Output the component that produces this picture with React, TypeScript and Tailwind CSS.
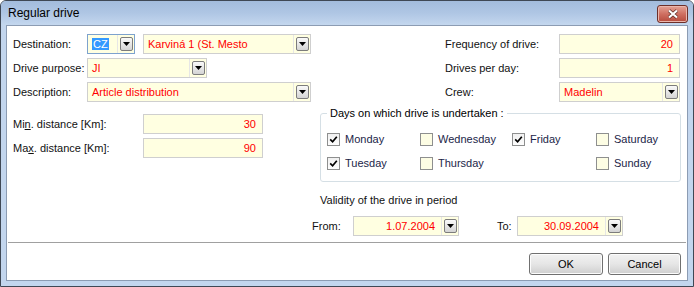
import React from "react";

type FieldProps = {
  className: string;
  value: string;
  right?: boolean;
  drop?: boolean;
  focus?: boolean;
};

function DropButton() {
  return (
    <div className="w-[17px] h-full flex items-center justify-center border-l border-[#e6e6e6] shrink-0">
      <div className="w-[13px] h-[14px] rounded-[2px] border border-[#7c7c7c] bg-linear-to-b from-[#fafafa] to-[#d4d4d4] flex items-center justify-center">
        <svg width="7" height="4" viewBox="0 0 7 4">
          <path d="M0 0h7L3.5 4z" fill="#000" />
        </svg>
      </div>
    </div>
  );
}

function Field({ className, value, right, drop, focus }: FieldProps) {
  return (
    <div
      className={`h-[20px] flex items-center bg-[#ffffe1] border ${focus ? "border-[#7da2ce]" : "border-[#cfcfcf]"} ${className}`}
    >
      {focus ? (
        <div className="flex-1 pl-[4px]">
          <span className="bg-[#3399ff] text-white px-[1px]">{value}</span>
        </div>
      ) : (
        <div className={`flex-1 text-[#ff0000] truncate ${right ? "text-right pr-[6px]" : "pl-[4px]"}`}>{value}</div>
      )}
      {drop && <DropButton />}
    </div>
  );
}

function Check({ label, checked }: { label: string; checked?: boolean }) {
  return (
    <div className="flex items-center h-[16px]">
      <div
        className={`w-[13px] h-[13px] border border-[#8e8f8f] flex items-center justify-center ${checked ? "bg-linear-to-b from-[#f0f0f0] to-[#fdfdfd]" : "bg-[#fdfde4]"}`}
      >
        {checked && (
          <svg width="9" height="9" viewBox="0 0 9 9">
            <path d="M1.2 4.4 L3.6 6.8 L7.8 1.8" fill="none" stroke="#000" strokeWidth="1.7" />
          </svg>
        )}
      </div>
      <span className="ml-[5px] text-[#1b2548]">{label}</span>
    </div>
  );
}

function WinButton({ label, className }: { label: string; className: string }) {
  return (
    <div
      className={`h-[22px] rounded-[3px] border border-[#707070] bg-linear-to-b from-[#f2f2f2] via-[#e6e6e6] to-[#cfcfcf] shadow-[inset_0_0_0_1px_#fcfcfc] flex items-center justify-center text-black ${className}`}
    >
      {label}
    </div>
  );
}

export default function App() {
  return (
    <div className="w-[694px] h-[287px] flex flex-col bg-[#c3d6ee] border border-[#3f4855] rounded-t-[6px] overflow-hidden font-['Liberation_Sans',Arial,sans-serif] text-[11px] text-[#111]">
      {/* title bar */}
      <div className="h-[25px] flex items-center justify-between pl-[7px] pr-[5px] bg-linear-to-b from-[#a3bcdd] via-[#afc6e4] to-[#c4d7ee]">
        <span className="text-[12px] text-black">Regular drive</span>
        <div className="w-[31px] h-[18px] mt-[2px] rounded-[3px] border border-[#6d2f29] bg-linear-to-b from-[#e3a396] via-[#cf6f61] to-[#b64a3c] flex items-center justify-center shadow-[inset_0_0_0_1px_#eab6ac]">
          <svg width="12" height="10" viewBox="0 0 12 10">
            <path d="M2 1.5 L10 8.5 M10 1.5 L2 8.5" stroke="#5a2a24" strokeWidth="3.6" />
            <path d="M2 1.5 L10 8.5 M10 1.5 L2 8.5" stroke="#fff" strokeWidth="2.2" />
          </svg>
        </div>
      </div>

      <div className="flex flex-1 px-[5px]">
        <div className="flex-1 bg-white border border-[#8c9cb3] flex flex-col pt-[8px] pb-[5px]">
          {/* top rows */}
          <div className="flex flex-col gap-[4px]">
            <div className="flex items-center h-[20px]">
              <div className="w-[438px] pl-[6px] flex items-center">
                <span className="w-[74px]">Destination:</span>
                <Field className="w-[48px]" value="CZ" drop focus />
                <Field className="w-[168px] ml-[8px]" value="Karviná 1 (St. Mesto" drop />
              </div>
              <span className="w-[114px]">Frequency of drive:</span>
              <Field className="w-[121px]" value="20" right />
            </div>
            <div className="flex items-center h-[20px]">
              <div className="w-[438px] pl-[6px] flex items-center">
                <span className="w-[74px]">Drive purpose:</span>
                <Field className="w-[120px]" value="JI" drop />
              </div>
              <span className="w-[114px]">Drives per day:</span>
              <Field className="w-[121px]" value="1" right />
            </div>
            <div className="flex items-center h-[20px]">
              <div className="w-[438px] pl-[6px] flex items-center">
                <span className="w-[74px]">Description:</span>
                <Field className="w-[224px]" value="Article distribution" drop />
              </div>
              <span className="w-[114px]">Crew:</span>
              <Field className="w-[121px]" value="Madelin" drop />
            </div>
          </div>

          {/* distances + days */}
          <div className="flex items-start mt-[5px]">
            <div className="w-[313px] pl-[6px] pt-[7px] flex flex-col gap-[4px]">
              <div className="flex items-center h-[20px]">
                <span className="w-[130px]">
                  Mi<span className="underline">n</span>. distance [Km]:
                </span>
                <Field className="w-[120px]" value="30" right />
              </div>
              <div className="flex items-center h-[20px]">
                <span className="w-[130px]">
                  Ma<span className="underline">x</span>. distance [Km]:
                </span>
                <Field className="w-[120px]" value="90" right />
              </div>
            </div>
            <fieldset className="w-[361px] border border-[#d5dfe5] rounded-[3px] pl-[6px] pt-[11px] pb-[10px]">
              <legend className="px-[3px] leading-[13px] text-black">Days on which drive is undertaken :</legend>
              <div className="grid grid-cols-[93px_92px_84px_auto] gap-y-[8px]">
                <Check label="Monday" checked />
                <Check label="Wednesday" />
                <Check label="Friday" checked />
                <Check label="Saturday" />
                <Check label="Tuesday" checked />
                <Check label="Thursday" />
                <div />
                <Check label="Sunday" />
              </div>
            </fieldset>
          </div>

          {/* validity */}
          <div className="ml-[305px] mt-[11px] flex flex-col">
            <span className="pl-[8px] h-[14px] leading-[14px]">Validity of the drive in period</span>
            <div className="flex items-center h-[20px] mt-[9px]">
              <span className="w-[41px]">From:</span>
              <Field className="w-[106px]" value="1.07.2004" right drop />
              <span className="ml-[38px] w-[20px]">To:</span>
              <Field className="w-[106px]" value="30.09.2004" right drop />
            </div>
          </div>

          <div className="mt-[6px] mx-[1px] h-px bg-[#a0a0a0]" />

          <div className="mt-[10px] flex justify-end gap-[5px] pr-[6px]">
            <WinButton label="OK" className="w-[74px]" />
            <WinButton label="Cancel" className="w-[73px]" />
          </div>
        </div>
      </div>
      <div className="h-[5px]" />
    </div>
  );
}
